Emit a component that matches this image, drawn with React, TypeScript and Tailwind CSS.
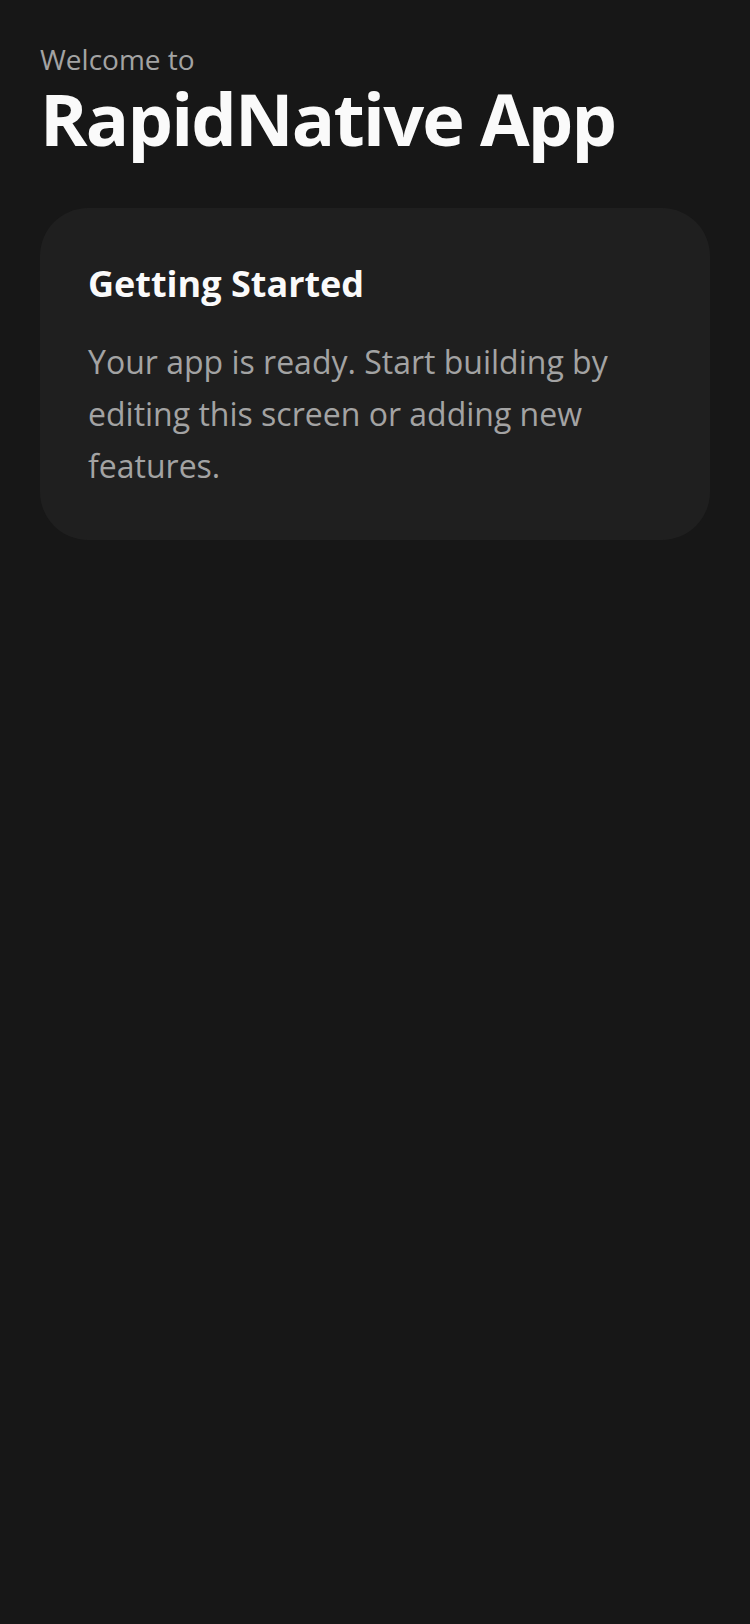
export default function App() {
  return (
    <div
      className="min-h-[1624px] w-full bg-[#171717] px-10 pt-[39px]"
      style={{ fontFamily: '"Open Sans", "Noto Sans", sans-serif' }}
    >
      <p className="text-[28px] leading-[40px] text-[#a3a3a3]">Welcome to</p>
      <h1 className="mt-[3px] text-[72px] font-bold leading-[72px] tracking-[-1.8px] text-[#fafafa]">
        RapidNative App
      </h1>
      <div className="mt-[54px] rounded-[48px] bg-[#1f1f1f] p-12">
        <h2 className="text-[36px] font-bold leading-[56px] text-[#fafafa]">
          Getting Started
        </h2>
        <p className="mt-6 text-[32px] leading-[52px] text-[#a3a3a3]">
          Your app is ready. Start building by editing this screen or adding new features.
        </p>
      </div>
    </div>
  );
}
